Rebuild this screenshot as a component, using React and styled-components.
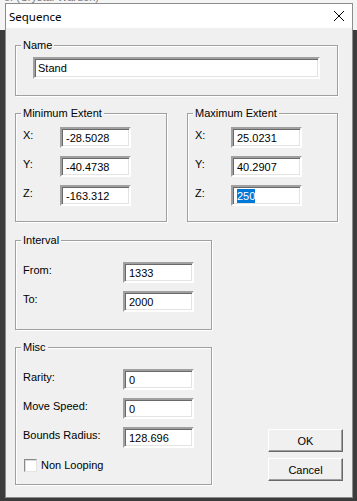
import React from 'react';
import styled, { createGlobalStyle } from 'styled-components';

const GlobalStyle = createGlobalStyle`
    html, body {
        margin: 0;
        padding: 0;
    }
    body {
        width: 357px;
        height: 501px;
        overflow: hidden;
        font-family: "Liberation Sans", Arial, sans-serif;
        font-size: 11px;
        color: #000;
    }
`;

const Desktop = styled.div`
    width: 357px;
    height: 501px;
    overflow: hidden;
    background: linear-gradient(to bottom, #f4f4f4 0, #f4f4f4 30px, #3c3c3c 30px);
`;

const BehindText = styled.div`
    height: 3px;
    overflow: hidden;
    padding-left: 4px;
    background: #f4f4f4;
    span {
        display: block;
        margin-top: -9px;
        line-height: 12px;
        font-size: 11px;
        color: #7a7a7a;
        white-space: nowrap;
    }
`;

const Window = styled.div`
    margin-left: 5px;
    width: 348px;
    box-sizing: border-box;
    border: 1px solid #8c8c8c;
    background: #f0f0f0;
`;

const TitleBar = styled.div`
    height: 24px;
    background: #fff;
    display: flex;
    align-items: center;
    justify-content: space-between;
    padding: 0 7px 0 3px;
`;

const Title = styled.span`
    font-family: "Noto Sans", "Open Sans", sans-serif;
    font-size: 11.5px;
    color: #000;
`;

const Body = styled.div`
    padding: 17px 9px 12px 9px;
    display: flex;
    flex-direction: column;
`;

const Group = styled.section`
    border: 1px solid #a0a0a0;
    box-shadow: inset 1px 1px 0 #fff, 1px 1px 0 #fff;
    padding: 0 ${p => p.$padRight ?? 7}px ${p => p.$padBottom ?? 16}px 7px;
    width: ${p => p.$width}px;
    box-sizing: border-box;
`;

const Caption = styled.div`
    width: fit-content;
    margin: -7px 0 0 -2px;
    padding: 0 2px;
    line-height: 13px;
    background: #f0f0f0;
`;

const Fields = styled.div`
    display: grid;
    grid-template-columns: ${p => p.$labelWidth}px 71px;
    row-gap: 8px;
    margin-top: ${p => p.$top}px;
`;

const Label = styled.span`
    line-height: 13px;
    padding-top: 2px;
    white-space: nowrap;
`;

const Field = styled.div`
    height: ${p => p.$height ?? 21}px;
    margin-top: ${p => p.$top ?? 0}px;
    margin-left: ${p => p.$left ?? 0}px;
    box-sizing: border-box;
    background: #fff;
    border: 2px solid;
    border-color: #a0a0a0 #fff #fff #a0a0a0;
    box-shadow: inset 1px 1px 0 #696969, inset -1px -1px 0 #e3e3e3;
    padding: 0 ${p => p.$pad ?? 4}px;
    display: flex;
    align-items: center;
    white-space: nowrap;
`;

const Selected = styled.span`
    background: #0078d7;
    color: #fff;
    line-height: 14px;
`;

const ExtentRow = styled.div`
    display: grid;
    grid-template-columns: 152px 151px;
    column-gap: 20px;
    margin-top: 17px;
`;

const Lower = styled.div`
    display: flex;
    align-items: flex-end;
    justify-content: space-between;
    margin-top: 18px;
`;

const LeftColumn = styled.div`
    display: flex;
    flex-direction: column;
    gap: 17px;
`;

const CheckRow = styled.label`
    display: flex;
    align-items: center;
    gap: 4px;
    margin: 11px 0 0 1px;
    line-height: 13px;
`;

const CheckBox = styled.span`
    width: 13px;
    height: 13px;
    box-sizing: border-box;
    background: #fff;
    border: 1px solid;
    border-color: #8a8a8a #e3e3e3 #e3e3e3 #8a8a8a;
    box-shadow: inset 1px 1px 0 #dcdcdc;
`;

const Buttons = styled.div`
    display: flex;
    flex-direction: column;
    gap: 6px;
    margin-bottom: 4px;
`;

const Button = styled.button`
    width: 75px;
    height: 23px;
    box-sizing: border-box;
    background: #f0f0f0;
    border: 1px solid;
    border-color: #fff #696969 #696969 #fff;
    box-shadow: inset -1px -1px 0 #a0a0a0;
    font-family: "Liberation Sans", Arial, sans-serif;
    font-size: 11px;
    color: #000;
    padding: 0;
`;

function CloseIcon() {
    return (
        <svg width="12" height="12" viewBox="0 0 12 12">
            <path d="M1 1 L11 11 M11 1 L1 11" stroke="#000" strokeWidth="1" fill="none" />
        </svg>
    );
}

function Extent({ title, labelWidth, values, selectLast }) {
    return (
        <Group $padBottom={15}>
            <Caption>{title}</Caption>
            <Fields $labelWidth={labelWidth} $top={7}>
                {['X:', 'Y:', 'Z:'].map((axis, i) => (
                    <React.Fragment key={axis}>
                        <Label>{axis}</Label>
                        <Field>
                            {selectLast && i === 2 ? <Selected>{values[i]}</Selected> : values[i]}
                        </Field>
                    </React.Fragment>
                ))}
            </Fields>
        </Group>
    );
}

export default function App() {
    return (
        <Desktop>
            <GlobalStyle />
            <BehindText><span>of (Crystal Warden)</span></BehindText>
            <Window>
                <TitleBar>
                    <Title>Sequence</Title>
                    <CloseIcon />
                </TitleBar>
                <Body>
                    <Group $width={323} $padRight={17}>
                        <Caption>Name</Caption>
                        <Field $height={22} $top={5} $left={10} $pad={3}>Stand</Field>
                    </Group>
                    <ExtentRow>
                        <Extent title="Minimum Extent" labelWidth={37} values={['-28.5028', '-40.4738', '-163.312']} />
                        <Extent title="Maximum Extent" labelWidth={36} values={['25.0231', '40.2907', '250']} selectLast />
                    </ExtentRow>
                    <Lower>
                        <LeftColumn>
                            <Group $width={197} $padBottom={17}>
                                <Caption>Interval</Caption>
                                <Fields $labelWidth={100} $top={15}>
                                    <Label>From:</Label>
                                    <Field>1333</Field>
                                    <Label>To:</Label>
                                    <Field>2000</Field>
                                </Fields>
                            </Group>
                            <Group $width={197} $padBottom={12}>
                                <Caption>Misc</Caption>
                                <Fields $labelWidth={100} $top={15}>
                                    <Label>Rarity:</Label>
                                    <Field>0</Field>
                                    <Label>Move Speed:</Label>
                                    <Field>0</Field>
                                    <Label>Bounds Radius:</Label>
                                    <Field>128.696</Field>
                                </Fields>
                                <CheckRow>
                                    <CheckBox />
                                    Non Looping
                                </CheckRow>
                            </Group>
                        </LeftColumn>
                        <Buttons>
                            <Button>OK</Button>
                            <Button>Cancel</Button>
                        </Buttons>
                    </Lower>
                </Body>
            </Window>
        </Desktop>
    );
}
